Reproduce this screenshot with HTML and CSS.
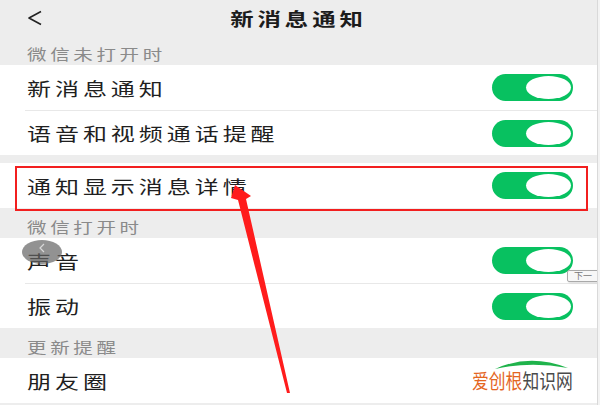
FILE: index.html
```html
<!DOCTYPE html>
<html lang="zh-CN">
<head>
    <meta charset="UTF-8">
    <meta name="viewport" content="width=device-width, initial-scale=1.0">
    <title>新消息通知</title>
    <link rel="stylesheet" href="styles.css">
</head>
<body>
    <div class="screen">
        <header class="topbar">
            <svg class="back" width="16" height="16" viewBox="0 0 16 16">
                <polyline points="14,1.5 2,8 14,14.5" fill="none" stroke="#222" stroke-width="1.6" stroke-linejoin="round"/>
            </svg>
            <h1 class="title"><span class="wide">新消息通知</span></h1>
            <span></span>
        </header>

        <div class="group-title"><span class="wide">微信未打开时</span></div>
        <div class="group">
            <div class="row"><span class="wide">新消息通知</span><span class="switch"><span class="knob"></span></span></div>
            <div class="row"><span class="wide">语音和视频通话提醒</span><span class="switch"><span class="knob"></span></span></div>
        </div>

        <div class="gap"></div>
        <div class="group">
            <div class="row"><span class="wide">通知显示消息详情</span><span class="switch"><span class="knob"></span></span></div>
        </div>

        <div class="group-title"><span class="wide">微信打开时</span></div>
        <div class="group">
            <div class="row"><span class="wide">声音</span><span class="switch"><span class="knob"></span></span></div>
            <div class="row"><span class="wide">振动</span><span class="switch"><span class="knob"></span></span></div>
        </div>

        <div class="group-title"><span class="wide">更新提醒</span></div>
        <div class="group">
            <div class="row"><span class="wide">朋友圈</span><span class="switch"><span class="knob"></span></span></div>
        </div>

        <!-- annotations drawn over the list -->
        <div class="highlight"></div>
        <svg class="arrow" width="597" height="405" viewBox="0 0 597 405">
            <polygon points="235,185 251,196 246,199 290,393 287,393 238,200 231,198" fill="#ff1c1c"/>
        </svg>
        <div class="float-btn">
            <svg width="8" height="10" viewBox="0 0 8 10">
                <polyline points="6,1 2,5 6,9" fill="none" stroke="#d8d8d8" stroke-width="1.2"/>
            </svg>
        </div>
        <div class="tip">下一</div>
        <div class="watermark">
            <svg class="wm-arc" width="112" height="12" viewBox="0 0 112 12">
                <path d="M27 11 Q62 -5 100 10 Q62 3 27 11 Z" fill="#1fb34b"/>
            </svg>
            <span class="wm-text"><span class="wm-orange">爱创根</span>知识网</span>
        </div>
    </div>
</body>
</html>
```

FILE: styles.css
```css
body {
    margin: 0;
    background-color: #f3f3f3;
    font-family: "Noto Sans CJK SC", "Noto Sans", sans-serif;
}

.screen {
    position: relative;
    width: 597px;
    height: 405px;
    overflow: hidden;
    background-color: #ededed;
    border-right: 1px solid #d9d9d9;
}

/* the screen is a little stretched sideways */
.wide {
    display: inline-block;
    transform: scaleX(1.3);
    transform-origin: left center;
    white-space: nowrap;
}

.topbar {
    height: 35px;
    display: grid;
    grid-template-columns: 1fr auto 1fr;
    align-items: center;
}

.back {
    margin-left: 27px;
    margin-top: 1px;
}

.title {
    margin: 0;
    font-size: 18px;
    font-weight: 700;
    color: #1c1c1c;
    letter-spacing: 3px;
    line-height: 22px;
}

.title .wide {
    transform-origin: center;
}

.group-title {
    height: 30px;
    box-sizing: border-box;
    padding: 7px 0 0 27px;
    display: flex;
    align-items: center;
    font-size: 15px;
    letter-spacing: 2.8px;
    color: #8a8a8a;
}

.group {
    background-color: #fff;
    padding-left: 25px;
}

.row {
    height: 45px;
    box-sizing: border-box;
    padding: 0 24px 0 2px;
    display: flex;
    align-items: center;
    justify-content: space-between;
    font-size: 18.5px;
    letter-spacing: 3px;
    color: #1f1f1f;
}

.row + .row {
    border-top: 1px solid #e8e8e8;
}

.gap {
    height: 8px;
}

.switch {
    width: 81px;
    height: 27px;
    box-sizing: border-box;
    padding: 2px;
    display: flex;
    justify-content: flex-end;
    border-radius: 14px;
    background-color: #08c160;
}

.knob {
    width: 45px;
    height: 23px;
    border-radius: 50%;
    background-color: #fff;
}

.highlight {
    position: absolute;
    left: 15px;
    top: 166px;
    width: 573px;
    height: 45px;
    box-sizing: border-box;
    border: 2px solid #f21f1f;
}

.arrow {
    position: absolute;
    left: 0;
    top: 0;
    pointer-events: none;
}

.float-btn {
    position: absolute;
    left: 22px;
    top: 240px;
    width: 40px;
    height: 24px;
    display: flex;
    justify-content: center;
    padding-top: 3px;
    box-sizing: border-box;
    border-radius: 50%;
    background-color: rgba(100, 100, 100, 0.7);
}

.tip {
    position: absolute;
    left: 567px;
    top: 270px;
    width: 40px;
    height: 12px;
    box-sizing: border-box;
    padding-left: 6px;
    background-color: #f7f7f7;
    border: 1px solid #a9a9a9;
    border-radius: 2px;
    box-shadow: 1px 1px 2px rgba(0, 0, 0, 0.15);
    font-size: 9px;
    line-height: 10px;
    color: #777;
}

.watermark {
    position: absolute;
    left: 468px;
    top: 358px;
    width: 112px;
    height: 42px;
    background-color: #fff;
}

.wm-arc {
    display: block;
}

.wm-text {
    display: inline-block;
    margin-left: 4px;
    font-size: 20px;
    line-height: 22px;
    color: #4a4a4a;
    transform: scaleX(0.84);
    transform-origin: left center;
    white-space: nowrap;
}

.wm-orange {
    color: #e4661f;
}
```
